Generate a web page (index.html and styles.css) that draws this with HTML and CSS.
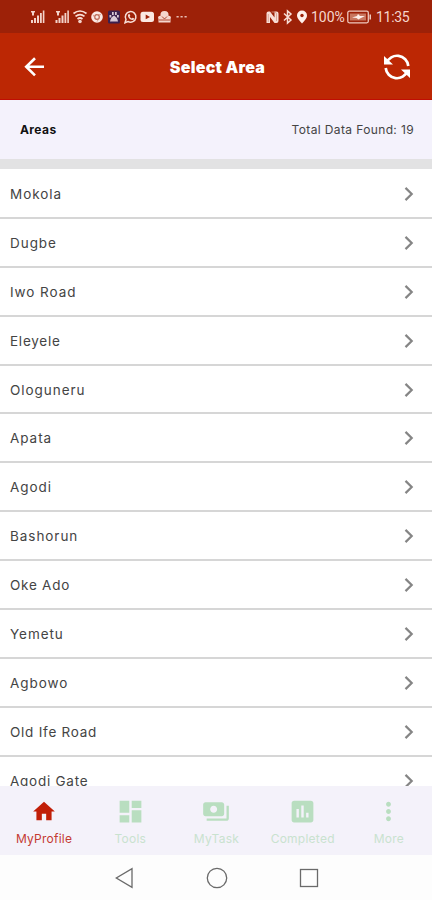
FILE: index.html
```html
<!DOCTYPE html>
<html lang="en">
<head>
    <meta charset="utf-8">
    <meta name="viewport" content="width=device-width, initial-scale=1">
    <title>Select Area</title>
    <link rel="stylesheet" href="styles.css">
</head>

<body>
    <div class="status-bar">
        <svg class="status-left" width="158" height="16" viewBox="30 9 158 16">
            <g fill="#f3d3ca">
                <path d="M31 20h2v3h-2zM34 18h2v5h-2zM37 15.500h2v7.500h-2zM40 13h1.800v10h-1.800zM42.800 10.500h1.600v12.500h-1.600zM31 11h4v1.500h-1v3h-2v-3h-1z"/>
                <path d="M55.500 20h2v3h-2zM58.500 18h2v5h-2zM61.500 15.500h2v7.500h-2zM64.500 13h1.800v10h-1.800zM67.300 10.500h1.600v12.500h-1.600zM56 11h4v1.500h-1v3h-2v-3h-1z"/>
                <circle cx="80" cy="21.500" r="1.800"/>
            </g>
            <path d="M73.500 13.500q6.500-5 13 0M75.500 16.300q4.500-3.500 9 0M77.500 19q2.500-2 5 0" fill="none" stroke="#f8ded6" stroke-width="1.700"/>
            <circle cx="97" cy="17" r="5.800" fill="#fbe9e3"/>
            <circle cx="97" cy="17" r="2.300" fill="none" stroke="#b86450" stroke-width="1.200"/>
            <path d="M97 14.700h4M95 18.200l-2-3.500M99 18.200l-2 3.500" stroke="#cf8c7c" stroke-width=".8"/>
            <rect x="108" y="10.500" width="12" height="13" rx="1.500" fill="#3c204e"/>
            <path d="M112 12h1.700v3H112zM115 12h1.700v3H115zM109.500 15h1.800v2.500h-1.800zM117 15h1.800v2.500H117zM114 15.500q3.500 2 4 6h-8q.5-4 4-6z" fill="#d9c9d6"/>
            <path d="M125 22.700l1-3.200a5.300 5.300 0 1 1 2 2z" fill="none" stroke="#f8ded6" stroke-width="1.500"/>
            <path d="M128.300 14.300l1.200-.3.800 1.800-.7.900q.8 1.300 2.200 1.800l.8-.8 1.700.9q0 1.400-1.500 1.500-3.500-.2-4.900-4z" fill="#f8ded6"/>
            <rect x="140.500" y="11.800" width="13.500" height="10.200" rx="2.500" fill="#fbe9e3"/>
            <path d="M145.700 14.500l4.300 2.400-4.300 2.400z" fill="#9d2108"/>
            <path d="M158.500 19q-1.500-3 2-3.200-.6-4.800 4-4.800t4 4.800q3.500.2 2 3.200v3.500h-12z" fill="#f5d6cd"/>
            <path d="M162 16.500l2.500 2.500 2.500-2.500M159 20h11" fill="none" stroke="#9d2108" stroke-width=".8"/>
            <path d="M176.500 16h2.200v1.500h-2.200zM180.500 16h2.200v1.500h-2.200zM184.500 16h2.200v1.500h-2.200z" fill="#e8bdb2"/>
        </svg>
        <div class="status-right">
            <svg width="42" height="16" viewBox="266 9 42 16">
                <path d="M266.500 23V13.500q0-2 2-2h1.500l4.500 6v-6h2q2 0 2 2V21q0 2-2 2h-2l-4.500-6v6z" fill="#f8ded6"/>
                <path d="M271.500 12h3q2 0 2 2v7M268.300 14v8" fill="none" stroke="#d59a8a" stroke-width=".8"/>
                <path d="M284 13.500l7 6.500-3.500 3V11l3.500 3-7 6.500" fill="none" stroke="#f8ded6" stroke-width="1.500"/>
                <path d="M302 10.500a5 5 0 0 1 5 5q0 3-5 8-5-5-5-8a5 5 0 0 1 5-5z" fill="#fff0eb"/>
                <circle cx="302" cy="15.500" r="1.700" fill="#9d2108"/>
            </svg>
            <span class="percent">100%</span>
            <svg width="25" height="14" viewBox="0 0 25 14">
                <rect x=".8" y="1.200" width="20.500" height="11.600" rx="1.500" fill="none" stroke="#efc9be" stroke-width="1.300"/>
                <rect x="3" y="3.500" width="16" height="7" fill="#c8765f"/>
                <path d="M5 7.500l5-1.500 1-2 2 2h5l-5 2.500-1.500 1-2-1.500z" fill="#fff0eb"/>
                <path d="M22.500 4.500H24v5h-1.500z" fill="#efc9be"/>
            </svg>
            <span class="clock">11:35</span>
        </div>
    </div>

    <div class="header">
        <svg class="back" width="21" height="20" viewBox="0 0 21 20">
            <path d="M11 1.200L2.200 9.800l8.800 8.600M2.200 9.800H20" fill="none" stroke="#fff" stroke-width="2.600"/>
        </svg>
        <h1 class="title">Select Area</h1>
        <svg class="refresh" width="28" height="28" viewBox="0 0 28 28">
            <path d="M3.500 10A11.300 11.300 0 0 1 25.300 13M24.500 18A11.300 11.300 0 0 1 2.700 15" fill="none" stroke="#fff" stroke-width="2.700"/>
            <path d="M1 3v8.500h9zM27 25v-8.500h-9z" fill="#fff"/>
        </svg>
    </div>

    <div class="summary">
        <span class="areas">Areas</span>
        <span class="total">Total Data Found: 19</span>
    </div>

    <!-- one chevron shared by all the rows -->
    <svg class="defs" width="0" height="0">
        <symbol id="chevron" viewBox="0 0 10 16">
            <path d="M1.500 1.900l6.200 6.100-6.200 6.100" fill="none" stroke="#858585" stroke-width="2.200"/>
        </symbol>
    </svg>

    <div class="list">
        <div class="row"><span>Mokola</span><svg class="chevron"><use href="#chevron"/></svg></div>
        <div class="row"><span>Dugbe</span><svg class="chevron"><use href="#chevron"/></svg></div>
        <div class="row"><span>Iwo Road</span><svg class="chevron"><use href="#chevron"/></svg></div>
        <div class="row"><span class="tight">Eleyele</span><svg class="chevron"><use href="#chevron"/></svg></div>
        <div class="row"><span>Ologuneru</span><svg class="chevron"><use href="#chevron"/></svg></div>
        <div class="row"><span>Apata</span><svg class="chevron"><use href="#chevron"/></svg></div>
        <div class="row"><span>Agodi</span><svg class="chevron"><use href="#chevron"/></svg></div>
        <div class="row"><span>Bashorun</span><svg class="chevron"><use href="#chevron"/></svg></div>
        <div class="row"><span class="tight">Oke Ado</span><svg class="chevron"><use href="#chevron"/></svg></div>
        <div class="row"><span>Yemetu</span><svg class="chevron"><use href="#chevron"/></svg></div>
        <div class="row"><span>Agbowo</span><svg class="chevron"><use href="#chevron"/></svg></div>
        <div class="row"><span class="tight">Old Ife Road</span><svg class="chevron"><use href="#chevron"/></svg></div>
        <div class="row"><span class="tight">Agodi Gate</span><svg class="chevron"><use href="#chevron"/></svg></div>
    </div>

    <div class="tabs">
        <div class="tab active">
            <svg width="26" height="26" viewBox="0 0 24 24"><path d="M10 20v-6h4v6h5v-8h3L12 3 2 12h3v8z"/></svg>
            <span>MyProfile</span>
        </div>
        <div class="tab">
            <svg width="29" height="29" viewBox="0 0 24 24"><path d="M3 13h8V3H3v10zm0 8h8v-6H3v6zm10 0h8V11h-8v10zm0-18v6h8V3h-8z"/></svg>
            <span>Tools</span>
        </div>
        <div class="tab">
            <svg width="28" height="28" viewBox="0 0 24 24"><path d="M19 14V6c0-1.100-.9-2-2-2H3c-1.100 0-2 .9-2 2v8c0 1.100.9 2 2 2h14c1.100 0 2-.9 2-2zm-9-1c-1.660 0-3-1.340-3-3s1.340-3 3-3 3 1.340 3 3-1.340 3-3 3zm13-6v11c0 1.100-.9 2-2 2H4v-2h17V7h2z"/></svg>
            <span>MyTask</span>
        </div>
        <div class="tab">
            <svg width="29" height="29" viewBox="0 0 24 24"><path d="M19 3H5c-1.100 0-2 .9-2 2v14c0 1.100.9 2 2 2h14c1.100 0 2-.9 2-2V5c0-1.100-.9-2-2-2zM9 17H7v-7h2v7zm4 0h-2V7h2v10zm4 0h-2v-4h2v4z"/></svg>
            <span>Completed</span>
        </div>
        <div class="tab">
            <svg width="29" height="29" viewBox="0 0 24 24"><path d="M12 8c1.100 0 2-.9 2-2s-.9-2-2-2-2 .9-2 2 .9 2 2 2zm0 2c-1.100 0-2 .9-2 2s.9 2 2 2 2-.9 2-2-.9-2-2-2zm0 6c-1.100 0-2 .9-2 2s.9 2 2 2 2-.9 2-2-.9-2-2-2z"/></svg>
            <span>More</span>
        </div>
    </div>

    <div class="system-nav">
        <svg width="22" height="22" viewBox="0 0 22 22"><path d="M18 1.700v18.600L2.300 11z"/></svg>
        <svg width="22" height="22" viewBox="0 0 22 22"><circle cx="11" cy="11" r="9.700"/></svg>
        <svg width="22" height="22" viewBox="0 0 22 22"><rect x="2.500" y="2.500" width="17" height="17"/></svg>
    </div>
</body>
</html>
```

FILE: styles.css
```css
* {
    box-sizing: border-box;
    margin: 0;
    padding: 0;
}

body {
    width: 432px;
    height: 900px;
    overflow: hidden;
    display: flex;
    flex-direction: column;
    background: #fff;
    font-family: Inter, "Open Sans", sans-serif;
    color: #444;
}

svg {
    display: block;
    flex: none;
}

.defs {
    position: absolute;
}

.status-bar {
    height: 33px;
    flex: none;
    display: flex;
    justify-content: space-between;
    align-items: center;
    padding: 0 21px 0 30px;
    background: #9d2108;
}

.status-right {
    display: flex;
    align-items: center;
    color: #f5d6cd;
    font-family: Roboto, sans-serif;
    font-size: 14px;
}

.percent {
    width: 36px;
    margin-left: 3px;
}

.clock {
    width: 35px;
    margin-left: 4px;
    letter-spacing: -0.300px;
}

.header {
    height: 67px;
    flex: none;
    display: flex;
    justify-content: space-between;
    align-items: center;
    padding: 1px 21px 0 24px;
    background: #bc2704;
    border-bottom: 1px solid #c00d03;
}

.title {
    color: #fff;
    font-size: 16px;
    font-weight: 900;
    letter-spacing: 0.250px;
    margin-left: 7px;
}

.summary {
    height: 69px;
    flex: none;
    display: flex;
    justify-content: space-between;
    align-items: center;
    padding: 0 18px 0 20px;
    background: #f4f2fc;
    border-bottom: 10px solid #e2e2e3;
}

.areas {
    color: #111;
    font-size: 12px;
    font-weight: 700;
    letter-spacing: 0.400px;
}

.total {
    font-size: 12px;
    letter-spacing: 0.370px;
}

.list {
    height: 617px;
    flex: none;
    overflow: hidden;
    padding-top: 1px;
}

.row {
    height: 48.900px;
    display: flex;
    justify-content: space-between;
    align-items: center;
    padding: 1px 18px 0 10px;
    border-bottom: 2px solid #d6d6d6;
    font-size: 13.500px;
    letter-spacing: 0.950px;
}

.tight {
    letter-spacing: 0.750px;
}

.chevron {
    width: 10px;
    height: 16px;
}

.tabs {
    height: 69px;
    flex: none;
    display: grid;
    grid-template-columns: repeat(5, 1fr);
    padding-left: 1px;
    background: #f4f2fa;
}

.tab {
    display: flex;
    flex-direction: column;
    align-items: center;
    padding-top: 11px;
    font-size: 12px;
    letter-spacing: 0.250px;
    color: #c9e2cf;
}

.tab svg {
    height: 29px;
    fill: #b9dec0;
}

.tab span {
    margin-top: 5px;
    line-height: 16px;
}

.active {
    color: #c43a32;
}

.active svg {
    fill: #c11f08;
}

.system-nav {
    height: 45px;
    flex: none;
    display: flex;
    justify-content: center;
    align-items: center;
    gap: 70px;
    padding-left: 1px;
    background: #fdfdfd;
}

.system-nav svg {
    fill: none;
    stroke: #6a6a6a;
    stroke-width: 1.300;
}
```
